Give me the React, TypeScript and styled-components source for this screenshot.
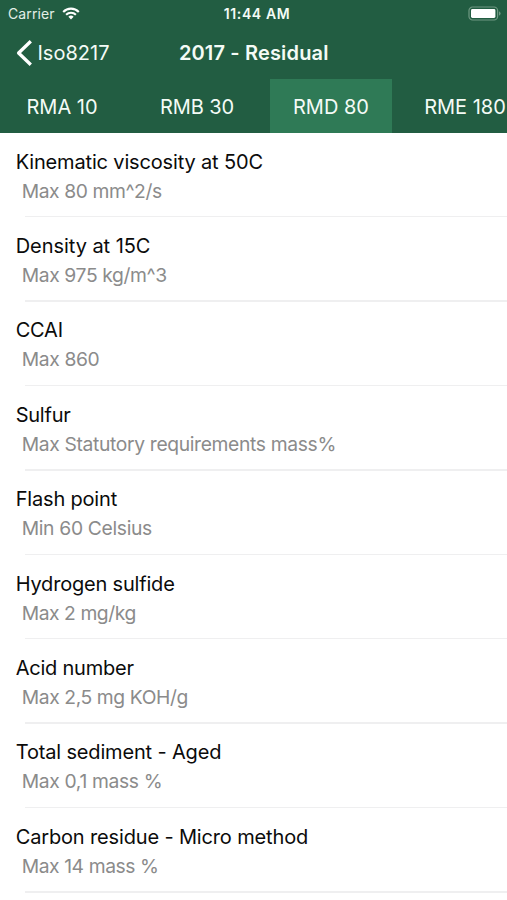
import React from "react";
import styled, { createGlobalStyle } from "styled-components";

const GlobalStyle = createGlobalStyle`
  * { box-sizing: border-box; }
  body {
    margin: 0;
    background: #fff;
    font-family: Inter, "Liberation Sans", sans-serif;
    overflow: hidden;
  }
`;

const Screen = styled.div`
  width: 507px;
  height: 900px;
  overflow: hidden;
  background: #fff;
`;

const Header = styled.header`
  height: 132.6px;
  background: #225d42;
  color: #f4fbf6;
`;

const StatusBar = styled.div`
  display: grid;
  grid-template-columns: 1fr auto 1fr;
  align-items: center;
  height: 27px;
  padding: 0 6px 0 8px;
`;

const Carrier = styled.div`
  display: flex;
  align-items: center;
  gap: 7px;
  font-size: 14px;
  letter-spacing: 0.12px;
  color: #e3efe7;
`;

const Clock = styled.div`
  padding-left: 5px;
  font-size: 14px;
  font-weight: 600;
  letter-spacing: 0.6px;
`;

const BatterySlot = styled.div`
  display: flex;
  justify-content: flex-end;
`;

const NavBar = styled.nav`
  display: grid;
  grid-template-columns: 1fr auto 1fr;
  align-items: center;
  height: 52px;
  padding: 0 0 1px 16px;
`;

const BackButton = styled.button`
  display: flex;
  align-items: center;
  gap: 4.5px;
  padding: 0;
  border: 0;
  background: none;
  color: inherit;
  font: 400 20px Inter, "Liberation Sans", sans-serif;
`;

const Title = styled.h1`
  margin: 0;
  padding-right: 15.5px;
  font-size: 20px;
  font-weight: 600;
  letter-spacing: 0.16px;
`;

const Tabs = styled.div`
  display: flex;
  height: 53.6px;
  overflow: hidden;
`;

const Tab = styled.button<{ $active?: boolean; $width: number; $tracking?: number }>`
  flex: none;
  width: ${(p) => p.$width}px;
  padding: 2px 0 0;
  border: 0;
  background: ${(p) => (p.$active ? "#2f7a56" : "transparent")};
  color: inherit;
  font: 400 20px Inter, "Liberation Sans", sans-serif;
  letter-spacing: ${(p) => p.$tracking ?? 0}px;
  white-space: nowrap;
`;

const List = styled.ul`
  margin: 0;
  padding: 0;
  list-style: none;
`;

const Row = styled.li`
  height: 84.4px;
  padding: 15px 0 0 15.7px;

  &::after {
    content: "";
    display: block;
    height: 1.4px;
    margin: 11.4px 0 0 9.3px;
    background: #efeff0;
  }
`;

const Name = styled.div<{ $tracking: number }>`
  font-size: 20px;
  line-height: 28px;
  letter-spacing: ${(p) => p.$tracking}px;
  color: #0b0b0b;
`;

const Limit = styled.div<{ $tracking: number }>`
  padding: 1px 0 0 6px;
  font-size: 19.3px;
  line-height: 28px;
  letter-spacing: ${(p) => p.$tracking}px;
  color: #8b8b8b;
`;

const properties = [
  { name: "Kinematic viscosity at 50C", nt: -0.16, limit: "Max 80 mm^2/s", lt: -0.42 },
  { name: "Density at 15C", nt: -0.05, limit: "Max 975 kg/m^3", lt: -0.38 },
  { name: "CCAI", nt: -0.2, limit: "Max 860", lt: -0.36 },
  { name: "Sulfur", nt: -0.24, limit: "Max Statutory requirements mass%", lt: -0.35 },
  { name: "Flash point", nt: -0.18, limit: "Min 60 Celsius", lt: -0.33 },
  { name: "Hydrogen sulfide", nt: -0.19, limit: "Max 2 mg/kg", lt: -0.44 },
  { name: "Acid number", nt: -0.22, limit: "Max 2,5 mg KOH/g", lt: -0.4 },
  { name: "Total sediment - Aged", nt: -0.16, limit: "Max 0,1 mass %", lt: -0.34 },
  { name: "Carbon residue - Micro method", nt: -0.15, limit: "Max 14 mass %", lt: -0.42 },
];

const WifiIcon = () => (
  <svg width="18" height="13" viewBox="0 0 18 13" fill="none" stroke="#fff" strokeWidth="2.1">
    <path d="M1.2 4.9a11 11 0 0 1 15.6 0" />
    <path d="M4.1 7.8a7 7 0 0 1 9.8 0" />
    <path d="M9 12.4 6.4 9.8a3.7 3.7 0 0 1 5.2 0Z" fill="#fff" stroke="none" />
  </svg>
);

const BatteryIcon = () => (
  <svg width="33" height="15" viewBox="0 0 33 15">
    <rect x="1" y="1" width="28.6" height="13" rx="3.6" fill="none" stroke="#6f9882" strokeWidth="1.2" />
    <rect x="3" y="3" width="24.4" height="9" rx="1.4" fill="#fff" />
    <path d="M31 5.2q1.6.7 1.6 2.3T31 9.8Z" fill="#6f9882" />
  </svg>
);

const BackIcon = () => (
  <svg width="17" height="28" viewBox="0 0 17 28" fill="none" stroke="#fff" strokeWidth="3.3" strokeLinejoin="round">
    <path d="M14.8 2.3 2.6 14l12.2 11.7" />
  </svg>
);

export default function App() {
  return (
    <Screen>
      <GlobalStyle />
      <Header>
        <StatusBar>
          <Carrier>
            Carrier
            <WifiIcon />
          </Carrier>
          <Clock>11:44 AM</Clock>
          <BatterySlot>
            <BatteryIcon />
          </BatterySlot>
        </StatusBar>
        <NavBar>
          <BackButton>
            <BackIcon />
            Iso8217
          </BackButton>
          <Title>2017 - Residual</Title>
        </NavBar>
        <Tabs>
          <Tab $width={124}>RMA 10</Tab>
          <Tab $width={146} $tracking={-0.1}>RMB 30</Tab>
          <Tab $width={122} $active>RMD 80</Tab>
          <Tab $width={146}>RME 180</Tab>
        </Tabs>
      </Header>
      <List>
        {properties.map((p) => (
          <Row key={p.name}>
            <Name $tracking={p.nt}>{p.name}</Name>
            <Limit $tracking={p.lt}>{p.limit}</Limit>
          </Row>
        ))}
      </List>
    </Screen>
  );
}
